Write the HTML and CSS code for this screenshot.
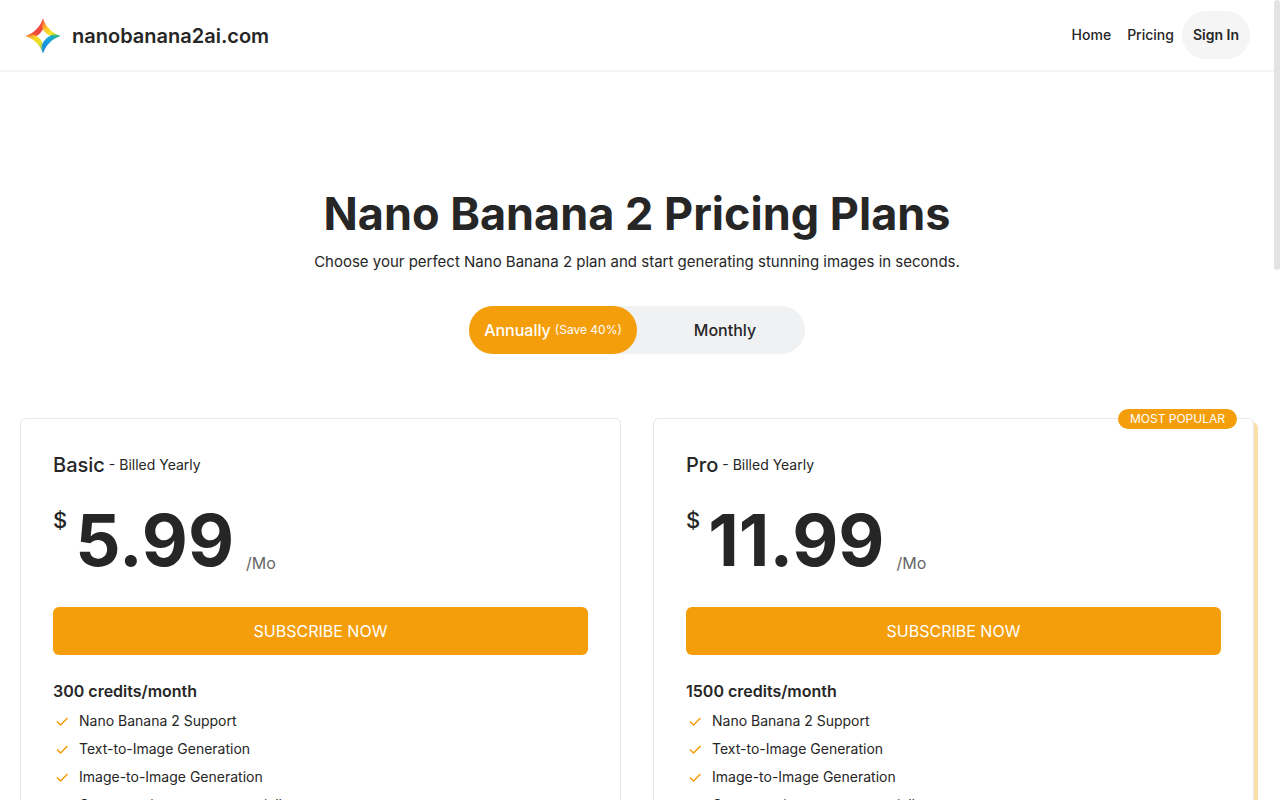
FILE: index.html
```html
<!DOCTYPE html>
<html lang="en">
<head>
<meta charset="utf-8">
<meta name="viewport" content="width=device-width, initial-scale=1">
<title>Nano Banana 2 Pricing Plans</title>
<link rel="stylesheet" href="styles.css">
</head>
<body>
<header class="site-header">
  <a class="brand" href="#">
    <svg class="brand-mark" viewBox="0 0 36 36" aria-hidden="true">
      <defs>
        <linearGradient id="nw" x1="0" y1="18" x2="18" y2="0" gradientUnits="userSpaceOnUse"><stop offset="0" stop-color="#f9862c"/><stop offset=".45" stop-color="#f0433a"/><stop offset="1" stop-color="#f2553a"/></linearGradient>
        <linearGradient id="ne" x1="18" y1="2" x2="35" y2="18" gradientUnits="userSpaceOnUse"><stop offset="0" stop-color="#f7603a"/><stop offset=".35" stop-color="#fcc62a"/><stop offset=".65" stop-color="#f4e62a"/><stop offset="1" stop-color="#27b578"/></linearGradient>
        <linearGradient id="se" x1="35" y1="18" x2="18" y2="35" gradientUnits="userSpaceOnUse"><stop offset="0" stop-color="#1fb886"/><stop offset=".4" stop-color="#18a5dc"/><stop offset="1" stop-color="#1687e0"/></linearGradient>
        <linearGradient id="sw" x1="1" y1="18" x2="18" y2="35" gradientUnits="userSpaceOnUse"><stop offset="0" stop-color="#f9862c"/><stop offset=".35" stop-color="#fbd928"/><stop offset=".65" stop-color="#dfe22c"/><stop offset="1" stop-color="#1e9fd0"/></linearGradient>
      </defs>
      <path fill="url(#nw)" d="M18 .5C15 9 9 15 .5 18L9 19.500C14 17 17 14 19 9Z"/>
      <path fill="url(#ne)" d="M18 .5C21 9 27 15 35.500 18L27 18C22 17 19 14 17 9Z"/>
      <path fill="url(#sw)" d="M.5 18C9 21 15 27 18 35.500L18 27C17 22 14 19 9 17Z"/>
      <path fill="url(#se)" d="M35.500 18C27 21 21 27 18 35.500L17 27C19 22 22 19 27 17Z"/>
    </svg>
    <span>nanobanana2ai.com</span>
  </a>
  <nav class="site-nav">
    <a class="nav-link" href="#">Home</a>
    <a class="nav-link" href="#">Pricing</a>
    <button class="sign-in" type="button">Sign In</button>
  </nav>
</header>

<main class="pricing">
  <h1 class="title">Nano Banana 2 Pricing Plans</h1>
  <p class="subtitle">Choose your perfect Nano Banana 2 plan and start generating stunning images in seconds.</p>
  <div class="period">
    <button class="period-option period-active" type="button" aria-pressed="true">Annually <small class="saving">(Save 40%)</small></button>
    <button class="period-option period-monthly" type="button" aria-pressed="false">Monthly</button>
  </div>

  <div class="plans">
    <section class="plan">
      <h2 class="plan-name">Basic <span class="billing">- Billed Yearly</span></h2>
      <p class="price"><span class="currency">$</span><span class="amount">5.99</span><span class="per">/Mo</span></p>
      <button class="subscribe" type="button">SUBSCRIBE NOW</button>
      <h3 class="credits">300 credits/month</h3>
      <ul class="features">
        <li class="feature"><svg class="check" viewBox="0 0 18 18" aria-hidden="true"><path d="M4 9.500l3.500 3.500 7-7"/></svg>Nano Banana 2 Support</li>
        <li class="feature"><svg class="check" viewBox="0 0 18 18" aria-hidden="true"><path d="M4 9.500l3.500 3.500 7-7"/></svg>Text-to-Image Generation</li>
        <li class="feature"><svg class="check" viewBox="0 0 18 18" aria-hidden="true"><path d="M4 9.500l3.500 3.500 7-7"/></svg>Image-to-Image Generation</li>
        <li class="feature"><svg class="check" viewBox="0 0 18 18" aria-hidden="true"><path d="M4 9.500l3.500 3.500 7-7"/></svg>Can reuse images commercially</li>
      </ul>
    </section>
    <section class="plan plan-popular">
      <span class="badge">MOST POPULAR</span>
      <h2 class="plan-name">Pro <span class="billing">- Billed Yearly</span></h2>
      <p class="price"><span class="currency">$</span><span class="amount">11.99</span><span class="per">/Mo</span></p>
      <button class="subscribe" type="button">SUBSCRIBE NOW</button>
      <h3 class="credits">1500 credits/month</h3>
      <ul class="features">
        <li class="feature"><svg class="check" viewBox="0 0 18 18" aria-hidden="true"><path d="M4 9.500l3.500 3.500 7-7"/></svg>Nano Banana 2 Support</li>
        <li class="feature"><svg class="check" viewBox="0 0 18 18" aria-hidden="true"><path d="M4 9.500l3.500 3.500 7-7"/></svg>Text-to-Image Generation</li>
        <li class="feature"><svg class="check" viewBox="0 0 18 18" aria-hidden="true"><path d="M4 9.500l3.500 3.500 7-7"/></svg>Image-to-Image Generation</li>
        <li class="feature"><svg class="check" viewBox="0 0 18 18" aria-hidden="true"><path d="M4 9.500l3.500 3.500 7-7"/></svg>Can reuse images commercially</li>
      </ul>
    </section>
  </div>
</main>
<div class="scroll-thumb" aria-hidden="true"></div>
</body>
</html>
```

FILE: styles.css
```css
* { box-sizing: border-box; }
html { scrollbar-width: none; }
body {
  margin: 0;
  padding-right: 6px;
  background: #fff;
  color: #262626;
  font-family: Inter, "Liberation Sans", sans-serif;
  font-size: 16px;
  line-height: 24px;
}
h1, h2, h3, p, ul { margin: 0; padding: 0; }
button {
  border: 0;
  padding: 0;
  color: inherit;
  font: inherit;
  cursor: pointer;
}
a { color: inherit; text-decoration: none; }

.site-header {
  display: flex;
  align-items: center;
  justify-content: space-between;
  padding: 11px 24px;
  border-bottom: 2px solid #f6f6f6;
}
.brand {
  display: flex;
  align-items: center;
  gap: 10px;
  padding-top: 2px;
  font-size: 20px;
  font-weight: 600;
}
.brand-mark { width: 38px; height: 36px; }
.site-nav {
  display: flex;
  align-items: center;
  font-size: 14px;
  font-weight: 500;
}
.nav-link { padding: 0 8px; }
.sign-in {
  height: 48px;
  padding: 0 11px;
  border-radius: 24px;
  background: #f5f5f5;
  font-weight: 600;
}

.pricing {
  display: flex;
  flex-direction: column;
  align-items: center;
  padding: 112px 20px 64px;
}
.title {
  font-size: 45px;
  font-weight: 700;
  line-height: 60px;
  text-align: center;
}
.subtitle {
  padding-top: 6px;
  font-size: 15px;
  text-align: center;
}
.period {
  display: flex;
  margin-top: 32px;
  border-radius: 24px;
  background: #f0f1f2;
}
.period-option {
  display: flex;
  align-items: center;
  justify-content: center;
  gap: 4px;
  width: 168px;
  height: 48px;
  border-radius: 24px;
  background: transparent;
  font-weight: 500;
}
.period-active { background: #f59e0b; color: #fff; }
.period-monthly { padding-left: 8px; }
.saving { font-size: 12px; font-weight: 400; }

.plans {
  display: grid;
  grid-template-columns: 1fr 1fr;
  gap: 32px;
  width: 100%;
  margin-top: 64px;
}
.plan {
  position: relative;
  padding: 32px;
  border: 1px solid #e8e8e8;
  border-radius: 6px;
  background: #fff;
}
.plan-popular { box-shadow: 4px 4px 0 #fbdfa8; }
.badge {
  position: absolute;
  top: -10px;
  right: 16px;
  padding: 0 12px;
  border-radius: 10px;
  background: #f59e0b;
  color: #fff;
  font-size: 12px;
  line-height: 20px;
}
.plan-name {
  display: flex;
  align-items: center;
  gap: 4px;
  font-size: 20px;
  font-weight: 500;
  line-height: 28px;
}
.billing { font-size: 14px; font-weight: 400; }
.price { display: flex; padding-top: 25px; }
.currency {
  padding-right: 8px;
  font-size: 22px;
  font-weight: 500;
  line-height: 32px;
}
.amount {
  font-size: 71px;
  font-weight: 700;
  line-height: 72px;
}
.per {
  align-self: flex-end;
  padding: 0 0 1px 12px;
  color: #666;
}
.subscribe {
  width: 100%;
  height: 48px;
  margin-top: 31px;
  border-radius: 6px;
  background: #f59e0b;
  color: #fff;
}
.credits {
  padding-top: 24px;
  font-size: 16px;
  font-weight: 600;
}
.features { padding-top: 4px; list-style: none; }
.feature {
  display: flex;
  align-items: center;
  gap: 8px;
  font-size: 14px;
  line-height: 28px;
}
.check {
  width: 18px;
  height: 18px;
  fill: none;
  stroke: #f59e0b;
  stroke-width: 1.5;
}

.scroll-thumb {
  position: fixed;
  top: 0;
  right: 0;
  width: 6px;
  height: 270px;
  border-radius: 3px;
  background: #e3e3e3;
}
```
